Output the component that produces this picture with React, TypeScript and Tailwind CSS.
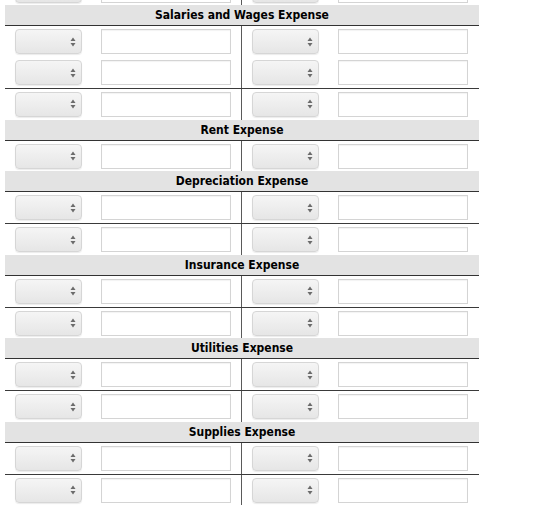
const accounts = [
  { title: "Salaries and Wages Expense", rows: 3, ruleAfter: 2 },
  { title: "Rent Expense", rows: 1, ruleAfter: 0 },
  { title: "Depreciation Expense", rows: 2, ruleAfter: 1 },
  { title: "Insurance Expense", rows: 2, ruleAfter: 1 },
  { title: "Utilities Expense", rows: 2, ruleAfter: 1 },
  { title: "Supplies Expense", rows: 2, ruleAfter: 1 },
];

function SelectBox() {
  return (
    <button
      type="button"
      className="flex h-[25px] w-[67px] shrink-0 items-center justify-end rounded-[4px] border border-[#d6d6d6] bg-gradient-to-b from-[#f5f5f5] to-[#e6e6e6] pr-[5px] shadow-[0_1px_1px_rgba(0,0,0,0.08)]"
    >
      <svg width="6" height="10" viewBox="0 0 6 10">
        <path d="M0.5 4 L3 0.5 L5.5 4 Z" fill="#6b6b6b" />
        <path d="M0.5 6 L3 9.5 L5.5 6 Z" fill="#6b6b6b" />
      </svg>
    </button>
  );
}

function AmountInput() {
  return (
    <input
      type="text"
      className="h-[25px] w-[130px] shrink-0 border border-[#d4d4d4] bg-white shadow-[inset_0_1px_1px_rgba(0,0,0,0.05)] outline-none"
    />
  );
}

function EntryRow({ ruled }: { ruled?: boolean }) {
  return (
    <div
      className={
        ruled
          ? "grid grid-cols-2 border-b border-[#3a3a3a]"
          : "grid grid-cols-2"
      }
    >
      <div className="flex gap-[19px] border-r border-[#5a5a5a] pt-[3px] pb-[2.75px] pl-[10px]">
        <SelectBox />
        <AmountInput />
      </div>
      <div className="flex gap-[19px] pt-[3px] pb-[2.75px] pl-[10px]">
        <SelectBox />
        <AmountInput />
      </div>
    </div>
  );
}

export default function App() {
  return (
    <div className="h-[505px] w-[560px] overflow-hidden bg-white font-['DejaVu_Sans',Verdana,sans-serif]">
      <div className="-mt-[25.5px] ml-[5px] w-[474px]">
        <EntryRow />
        {accounts.map((account) => (
          <div key={account.title}>
            <div className="flex h-[21px] items-center justify-center border-b border-[#333] bg-[#e3e3e3] font-['DejaVu_Sans_Condensed','DejaVu_Sans',sans-serif] text-[12px] font-bold text-black">
              {account.title}
            </div>
            {Array.from({ length: account.rows }).map((_, i) => (
              <EntryRow key={i} ruled={i + 1 === account.ruleAfter} />
            ))}
          </div>
        ))}
      </div>
    </div>
  );
}
